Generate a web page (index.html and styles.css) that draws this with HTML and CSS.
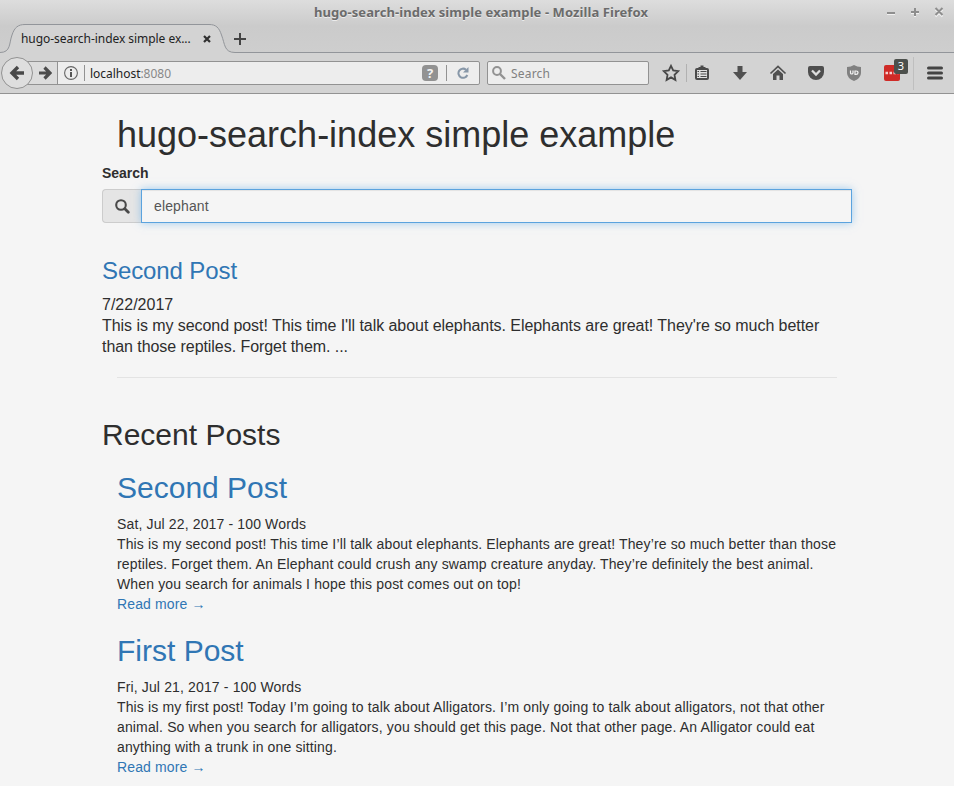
FILE: index.html
```html
<!DOCTYPE html>
<html lang="en">
<head>
<meta charset="utf-8">
<title>hugo-search-index simple example</title>
<link rel="stylesheet" href="styles.css">
</head>
<body>
<header class="browser">
  <div class="titlebar">
    <span class="window-title">hugo-search-index simple example - Mozilla Firefox</span>
    <svg class="window-controls" width="56" height="12" viewBox="0 0 56 12">
      <g fill="none" stroke="#f1f1f1" stroke-width="2"><path d="M1 8h8M25 7h8M29 3v8M49.500 3.500l7 7M56.500 3.500l-7 7"/></g>
      <g fill="none" stroke="#8e8e8e" stroke-width="2"><path d="M1 7h8M25 6h8M29 2v8M49.500 2l7 7M56.500 2l-7 7"/></g>
    </svg>
  </div>
  <div class="tabs">
    <svg class="tab-shape" width="954" height="30" viewBox="0 0 954 30">
      <path d="M0 26.500C11 26.500 9 17 12 9C14.500 1.500 18 -1.500 25 -1.500H209C216 -1.500 219 1.500 221.500 9C225 18 224 26.500 235 26.500H954V30H0Z" fill="#d3d3d3" stroke="none"/>
      <path d="M0 26.500C11 26.500 9 17 12 9C14.500 1.500 18 -1.500 25 -1.500H209C216 -1.500 219 1.500 221.500 9C225 18 224 26.500 235 26.500H954" fill="none" stroke="#92959a"/>
    </svg>
    <span class="tab-title">hugo-search-index simple ex...</span>
    <svg class="tab-close" width="8" height="8" viewBox="0 0 8 8"><path d="M1 1l6 6M7 1l-6 6" stroke="#303030" stroke-width="2.200"/></svg>
    <svg class="tab-new" width="12" height="12" viewBox="0 0 12 12"><path d="M6 0v12M0 6h12" stroke="#444" stroke-width="2"/></svg>
  </div>
  <div class="toolbar">
    <div class="back"><svg width="16" height="16" viewBox="0 0 16 16"><path d="M9 2L3 8l6 6M3 8h12" fill="none" stroke="#484848" stroke-width="3.400"/></svg></div>
    <div class="urlbar">
      <div class="forward"><svg width="14" height="14" viewBox="0 0 14 14"><path d="M6.500 1.500L12 7l-5.500 5.500M12 7H1" fill="none" stroke="#4c4c4c" stroke-width="3.200"/></svg></div>
      <svg class="info" width="14" height="14" viewBox="0 0 14 14"><circle cx="7" cy="7" r="6.400" fill="none" stroke="#666" stroke-width="1.100"/><path d="M7 3v2M7 6v5" stroke="#555" stroke-width="2"/></svg>
      <i class="divider"></i>
      <span class="address">localhost<span class="port">:8080</span></span>
      <b class="help">?</b>
      <i class="divider end"></i>
      <svg class="reload" width="12" height="12" viewBox="0 0 12 12"><path d="M9 2.700A4.600 4.600 0 1 0 10.300 8" fill="none" stroke="#8797a8" stroke-width="2"/><path d="M11.500 0v5.500H6Z" fill="#8797a8"/></svg>
    </div>
    <div class="searchbar">
      <svg width="14" height="14" viewBox="0 0 14 14"><circle cx="5" cy="5" r="3.900" fill="none" stroke="#929292" stroke-width="2"/><path d="M8 8l5 5" stroke="#929292" stroke-width="2.400"/></svg>
      <span>Search</span>
    </div>
    <svg class="tools" width="305" height="40" viewBox="649 53 305 40">
      <path d="M671 65.800l2.200 4.700 5 .7-3.700 3.600.9 5.100-4.400-2.500-4.400 2.500.9-5.100-3.700-3.600 5-.7Z" fill="none" stroke="#484848" stroke-width="1.800"/>
      <path d="M686.500 64v18" stroke="#b1b1b1"/>
      <rect x="696" y="69" width="12" height="10" rx="1" fill="#dedede" stroke="#4a4a4a" stroke-width="2"/>
      <path d="M698.500 69v-2h2v-1.500h3v1.500h2v2Z" fill="#4a4a4a"/>
      <path d="M697.500 71.500h1.500M700.500 71.500h6M697.500 74h1.500M700.500 74h6M697.500 76.500h1.500M700.500 76.500h6" stroke="#4a4a4a" stroke-width="1.100"/>
      <path d="M737.500 66h5v6h4.500l-7 8-7-8h4.500Z" fill="#505050"/>
      <path d="M770.500 73.500l7.500-7 7.500 7" fill="none" stroke="#505050" stroke-width="1.700"/>
      <path d="M773 74l5-4.500 5 4.500v6h-3.500v-4.500h-3V80H773Z" fill="#505050"/>
      <path d="M810 66h12q2 0 2 2v4a8 8 0 0 1-16 0v-4q0-2 2-2Z" fill="#4e4e4e"/>
      <path d="M812 70.500l4 4 4-4" fill="none" stroke="#ddd" stroke-width="2.300"/>
      <path d="M854 65q3 2 7 2v6q0 5-7 8-7-3-7-8v-6q4 0 7-2Z" fill="#808080"/>
      <path d="M850.500 70.500v2.500q0 1 1.200 1 1.300 0 1.300-1v-2.500M855 71h1q2 0 2 1.700 0 1.600-2 1.600h-1Z" fill="none" stroke="#f3f3f3" stroke-width="1.200"/>
      <rect x="884" y="65" width="16" height="16" rx="2" fill="#cf2b27"/>
      <path d="M885.500 73h13" stroke="#f7d0cf" stroke-width="2.500" stroke-dasharray="2.500 1.500"/>
      <path d="M913.500 57v33" stroke="#bfbfbf"/>
      <path d="M928.500 68h13M928.500 73h13M928.500 78h13" stroke="#444" stroke-width="3" stroke-linecap="round"/>
    </svg>
    <span class="badge">3</span>
  </div>
</header>
<main class="container">
  <h1>hugo-search-index simple example</h1>
  <label class="search-label" for="query">Search</label>
  <div class="input-group">
    <span class="addon"><svg width="15" height="15" viewBox="0 0 15 15"><circle cx="6" cy="6" r="4.800" fill="none" stroke="#494949" stroke-width="2.100"/><path d="M9.800 9.800l3.500 3.500" stroke="#494949" stroke-width="2.800" stroke-linecap="round"/></svg></span>
    <input class="query" id="query" type="text" value="elephant">
  </div>
  <section class="result">
    <h3><a href="#">Second Post</a></h3>
    <div>7/22/2017</div>
    <div class="summary">This is my second post! This time I'll talk about elephants. Elephants are great! They're so much better<br>than those reptiles. Forget them. ...</div>
  </section>
  <hr>
  <h2 class="recent">Recent Posts</h2>
  <article>
    <h2><a href="#">Second Post</a></h2>
    <div>Sat, Jul 22, 2017 - 100 Words</div>
    <div>This is my second post! This time I’ll talk about elephants. Elephants are great! They’re so much better than those<br>reptiles. Forget them. An Elephant could crush any swamp creature anyday. They’re definitely the best animal.<br>When you search for animals I hope this post comes out on top!</div>
    <a href="#">Read more →</a>
  </article>
  <article>
    <h2><a href="#">First Post</a></h2>
    <div>Fri, Jul 21, 2017 - 100 Words</div>
    <div>This is my first post! Today I’m going to talk about Alligators. I’m only going to talk about alligators, not that other<br>animal. So when you search for alligators, you should get this page. Not that other page. An Alligator could eat<br>anything with a trunk in one sitting.</div>
    <a href="#">Read more →</a>
  </article>
</main>
</body>
</html>
```
FILE: styles.css
```css
* { box-sizing: border-box; }
body {
  margin: 0;
  height: 786px;
  overflow: hidden;
  background: #f5f5f5;
  color: #2e2e2e;
  font: 14px/20px "Liberation Sans", Arial, sans-serif;
}
svg { display: block; flex: none; }

.browser {
  height: 94px;
  border-bottom: 1px solid #929292;
  background: linear-gradient(#dddddd, #cbcbcb 26px, #cecece 52px, #d3d3d3 53px);
  font-family: "Noto Sans", sans-serif;
}
.titlebar { position: relative; height: 26px; text-align: center; }
.window-title {
  display: block;
  padding-left: 8px;
  font-size: 13px;
  line-height: 25px;
  letter-spacing: .08px;
  font-weight: 700;
  color: #6b6b6b;
  text-shadow: 0 1px #ececec;
}
.window-controls { position: absolute; left: 886px; top: 6px; overflow: visible; }
.tabs { position: relative; height: 27px; display: flex; align-items: center; }
.tab-shape { position: absolute; left: 0; top: 0; overflow: visible; }
.tab-title { position: relative; margin-left: 21px; width: 182px; padding-bottom: 2px; font-size: 12px; line-height: 24px; letter-spacing: -.05px; color: #222; white-space: nowrap; }
.tab-close { position: relative; margin-top: -1px; }
.tab-new { position: relative; margin: -1px 0 0 23px; }
.toolbar { position: relative; height: 40px; display: flex; align-items: center; }
.back {
  position: relative;
  z-index: 1;
  width: 32px;
  height: 32px;
  margin-left: 1px;
  border: 1px solid #929292;
  border-radius: 50%;
  background: #dedede;
  display: flex;
  align-items: center;
  justify-content: center;
}
.urlbar {
  width: 464px;
  height: 24px;
  margin-left: -17px;
  border: 1px solid #929292;
  border-radius: 2px;
  background: #ededed;
  display: flex;
  align-items: center;
}
.forward { width: 41px; height: 22px; padding: 4px 0 0 21px; background: #dcdcdc; border-right: 1px solid #929292; }
.info { margin-left: 6px; }
.divider { width: 1px; height: 16px; margin-left: 6px; background: #929292; }
.address { margin-left: 5px; width: 332px; padding-top: 1px; font-size: 12px; letter-spacing: -.03px; color: #222; }
.port { color: #888; }
.help { width: 16px; height: 16px; border-radius: 4px; background: #929292; color: #f2f2f2; font-size: 13px; line-height: 16px; text-align: center; }
.divider.end { margin-left: 8px; }
.reload { margin-left: 10px; }
.searchbar {
  width: 162px;
  height: 24px;
  margin-left: 7px;
  padding-left: 4px;
  border: 1px solid #929292;
  border-radius: 2px;
  background: #ededed;
  display: flex;
  align-items: center;
  gap: 5px;
  color: #808080;
  font-size: 12px;
  letter-spacing: .2px;
}
.searchbar span { padding-top: 1px; }
.badge {
  position: absolute;
  left: 894px;
  top: 6px;
  width: 14px;
  height: 15px;
  border-radius: 2px;
  background: #4c504c;
  color: #fff;
  font-size: 11px;
  line-height: 14px;
  text-align: center;
}

.container { width: 750px; margin: 0 auto; padding-top: 20.500px; }
h1, h2, h3 { font-weight: 400; line-height: 1.1; letter-spacing: 0; margin: 20px 0 10px; }
h1 { height: 38px; font-size: 36px; margin-top: 0; padding-left: 15px; }
h2 { font-size: 30px; }
h3 { font-size: 24px; letter-spacing: -.1px; margin: 0 0 10px; }
a { color: #3076b4; text-decoration: none; }
.search-label { display: block; font-weight: 700; letter-spacing: -.05px; margin-bottom: 6.100px; }
.input-group { display: flex; height: 34px; margin-bottom: 35.400px; }
.addon { width: 39px; padding: 9px 0 0 12px; border: 1px solid #ccc; border-right: 0; border-radius: 4px 0 0 4px; background: #e5e5e5; }
.query {
  flex: 1;
  min-width: 0;
  padding: 6px 12px;
  border: 1px solid #5ba3de;
  background: #f5f5f5;
  color: #555;
  font: inherit;
  letter-spacing: .138px;
  box-shadow: inset 0 1px 1px rgba(0,0,0,.075), 0 0 8px rgba(102,175,233,.6);
  outline: 0;
}
.result { font-size: 16px; line-height: 21px; white-space: nowrap; }
.summary { letter-spacing: -.058px; }
hr { margin: 20px 15px; border: 0; border-top: 1px solid #e3e3e3; }
.recent { margin: 40px 0 0; }
article { padding: 0 15px; white-space: nowrap; letter-spacing: .14px; }
```
